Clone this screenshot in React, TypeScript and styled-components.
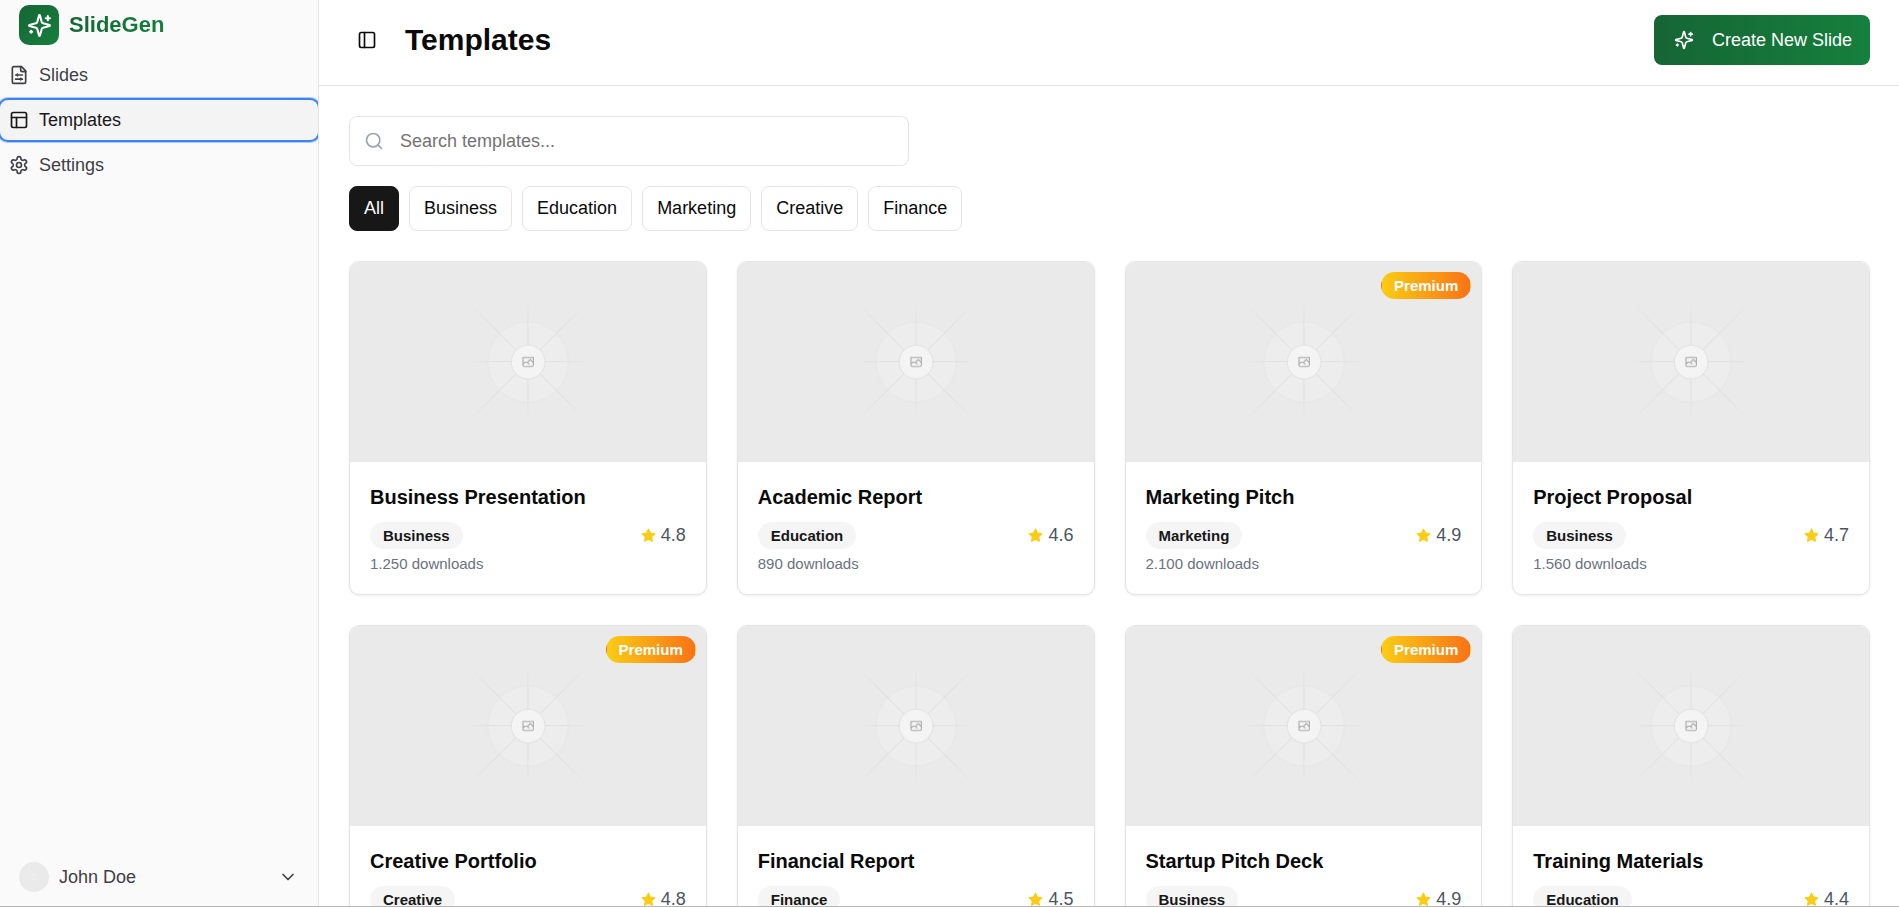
import React from "react";
import styled, { createGlobalStyle, css } from "styled-components";
import { ChevronDown, PanelLeft, PanelsTopLeft, Search } from "lucide-react";

const GlobalStyle = createGlobalStyle`
  *, *::before, *::after { box-sizing: border-box; }
  body {
    margin: 0;
    background: #ffffff;
    color: #0a0a0a;
    font-family: "Liberation Sans", Arial, Helvetica, sans-serif;
    font-size: 18px;
    line-height: 25px;
  }
  button, input { font: inherit; color: inherit; }
  svg { display: block; flex-shrink: 0; }
`;

const Shell = styled.div`
  display: flex;
  height: 100vh;
  overflow: hidden;
  border-bottom: 1px solid #b4b4b4;
`;

const Sidebar = styled.aside`
  display: flex;
  flex-direction: column;
  flex: 0 0 319px;
  overflow: hidden;
  background: #fafafa;
  border-right: 1px solid #e5e5e5;
  color: #3f3f46;
`;

const Brand = styled.a`
  display: flex;
  align-items: center;
  gap: 10px;
  padding: 5px 19px 10px;
  text-decoration: none;
`;

const BrandMark = styled.span`
  display: flex;
  align-items: center;
  justify-content: center;
  width: 40px;
  height: 40px;
  border-radius: 10px;
  background: linear-gradient(to bottom right, #166534, #15803d);
  color: #ffffff;
`;

const BrandName = styled.span`
  font-size: 22px;
  line-height: 30px;
  font-weight: 700;
  background: linear-gradient(to right, #166534, #15803d);
  background-clip: text;
  color: transparent;
`;

const Menu = styled.nav`
  display: flex;
  flex-direction: column;
  gap: 5px;
`;

const MenuLink = styled.a<{ $active?: boolean }>`
  display: flex;
  align-items: center;
  gap: 10px;
  height: 40px;
  padding: 0 9px;
  border-radius: 8px;
  color: inherit;
  text-decoration: none;
  ${({ $active }) =>
    $active &&
    css`
      background: #f4f4f5;
      color: #18181b;
      box-shadow: 0 0 0 2px #3b82f6, 0 0 0 3px rgba(59, 130, 246, 0.4);
    `}
`;

const UserButton = styled.button`
  display: flex;
  align-items: center;
  gap: 10px;
  margin-top: auto;
  padding: 14px 20px 14px 19px;
  border: 0;
  background: none;
  text-align: left;
`;

const UserName = styled.span`
  flex: 1;
`;

const Avatar = styled.span`
  width: 30px;
  height: 30px;
  border-radius: 50%;
  overflow: hidden;
`;

const Main = styled.main`
  flex: 1;
  min-width: 0;
  overflow: hidden;
`;

const Header = styled.header`
  display: flex;
  align-items: center;
  gap: 20px;
  padding: 15px 29px 20px 30px;
  border-bottom: 1px solid #e5e5e5;
`;

const IconButton = styled.button`
  display: flex;
  align-items: center;
  justify-content: center;
  width: 36px;
  height: 36px;
  padding: 0;
  border: 0;
  border-radius: 8px;
  background: none;
`;

const PageTitle = styled.h1`
  flex: 1;
  margin: 0;
  font-size: 30px;
  line-height: 40px;
  font-weight: 700;
`;

const CreateButton = styled.button`
  display: flex;
  align-items: center;
  gap: 18px;
  height: 50px;
  padding: 0 18px 0 20px;
  border: 0;
  border-radius: 8px;
  background: linear-gradient(to right, #166534, #15803d);
  color: #ffffff;
  white-space: nowrap;
`;

const Content = styled.div`
  padding: 30px 29px 30px 30px;
`;

const SearchField = styled.label`
  display: flex;
  align-items: center;
  gap: 16px;
  max-width: 560px;
  height: 50px;
  padding: 0 14px;
  border: 1px solid #e5e5e5;
  border-radius: 8px;
  color: #9ca3af;
`;

const SearchInput = styled.input`
  flex: 1;
  min-width: 0;
  padding: 0;
  border: 0;
  outline: 0;
  background: none;
  color: #0a0a0a;
  &::placeholder {
    color: #737373;
    opacity: 1;
  }
`;

const Filters = styled.div`
  display: flex;
  flex-wrap: wrap;
  gap: 10px;
  margin: 20px 0 30px;
`;

const FilterButton = styled.button<{ $active: boolean }>`
  height: 45px;
  padding: 0 14px;
  border: 1px solid ${({ $active }) => ($active ? "#171717" : "#e5e5e5")};
  border-radius: 8px;
  background: ${({ $active }) => ($active ? "#171717" : "#ffffff")};
  color: ${({ $active }) => ($active ? "#fafafa" : "#0a0a0a")};
`;

const Grid = styled.div`
  display: grid;
  grid-template-columns: repeat(4, minmax(0, 1fr));
  gap: 30px;
`;

const Card = styled.article`
  position: relative;
  overflow: hidden;
  border: 1px solid #e5e5e5;
  border-radius: 10px;
  background: #ffffff;
  box-shadow: 0 1px 3px rgba(0, 0, 0, 0.07);
`;

const Thumbnail = styled.div`
  height: 200px;
`;

const CardBody = styled.div`
  padding: 20px;
`;

const CardTitle = styled.h2`
  margin: 0 0 10px;
  font-size: 20px;
  line-height: 30px;
  font-weight: 700;
`;

const CardMeta = styled.div`
  display: flex;
  align-items: center;
  justify-content: space-between;
  margin-bottom: 5px;
`;

const Badge = styled.span`
  padding: 2px 12px;
  border: 1px solid transparent;
  border-radius: 14px;
  background: #f5f5f5;
  color: #171717;
  font-size: 15px;
  line-height: 21px;
  font-weight: 700;
`;

const PremiumBadge = styled(Badge)`
  position: absolute;
  top: 10px;
  right: 10px;
  background: linear-gradient(to right, #facc15, #f97316);
  color: #ffffff;
`;

const Rating = styled.span`
  display: flex;
  align-items: center;
  gap: 5px;
  color: #4b5563;
`;

const Downloads = styled.p`
  margin: 0;
  color: #6b7280;
  font-size: 15px;
  line-height: 20px;
`;

const PlaceholderSvg = styled.svg`
  width: 100%;
  height: 100%;
  background: #eaeaea;
`;

function Icon({
  size = 20,
  fill = "none",
  color = "currentColor",
  paths,
}: {
  size?: number;
  fill?: string;
  color?: string;
  paths: string[];
}) {
  return (
    <svg
      width={size}
      height={size}
      viewBox="0 0 24 24"
      fill={fill}
      stroke={color}
      strokeWidth="2"
      strokeLinecap="round"
      strokeLinejoin="round"
      aria-hidden="true"
    >
      {paths.map((d) => (
        <path key={d} d={d} />
      ))}
    </svg>
  );
}

const sparklesPaths = [
  "M9.937 15.5A2 2 0 0 0 8.5 14.063l-6.135-1.582a.5.5 0 0 1 0-.962L8.5 9.936A2 2 0 0 0 9.937 8.5l1.582-6.135a.5.5 0 0 1 .963 0L14.063 8.5A2 2 0 0 0 15.5 9.937l6.135 1.581a.5.5 0 0 1 0 .964L15.5 14.063a2 2 0 0 0-1.437 1.437l-1.582 6.135a.5.5 0 0 1-.963 0z",
  "M20 3v4",
  "M22 5h-4",
  "M4 17v2",
  "M5 18H3",
];

const fileSlidersPaths = [
  "M15 2H6a2 2 0 0 0-2 2v16a2 2 0 0 0 2 2h12a2 2 0 0 0 2-2V7Z",
  "M14 2v4a2 2 0 0 0 2 2h4",
  "M8 12h8",
  "M10 11v2",
  "M8 17h8",
  "M14 16v2",
];

const settingsPaths = [
  "M12.22 2h-.44a2 2 0 0 0-2 2v.18a2 2 0 0 1-1 1.73l-.43.25a2 2 0 0 1-2 0l-.15-.08a2 2 0 0 0-2.73.73l-.22.38a2 2 0 0 0 .73 2.73l.15.1a2 2 0 0 1 1 1.72v.51a2 2 0 0 1-1 1.74l-.15.09a2 2 0 0 0-.73 2.73l.22.38a2 2 0 0 0 2.73.73l.15-.08a2 2 0 0 1 2 0l.43.25a2 2 0 0 1 1 1.73V20a2 2 0 0 0 2 2h.44a2 2 0 0 0 2-2v-.18a2 2 0 0 1 1-1.73l.43-.25a2 2 0 0 1 2 0l.15.08a2 2 0 0 0 2.73-.73l.22-.39a2 2 0 0 0-.73-2.73l-.15-.08a2 2 0 0 1-1-1.74v-.5a2 2 0 0 1 1-1.74l.15-.09a2 2 0 0 0 .73-2.73l-.22-.38a2 2 0 0 0-2.73-.73l-.15.08a2 2 0 0 1-2 0l-.43-.25a2 2 0 0 1-1-1.73V4a2 2 0 0 0-2-2z",
  "M12 9a3 3 0 1 0 0 6a3 3 0 1 0 0-6z",
];

const starPaths = [
  "M12 2l3.09 6.26L22 9.27l-5 4.87 1.18 6.88L12 17.77l-6.18 3.25L7 14.14 2 9.27l6.91-1.01z",
];

const rays = [
  { angle: 0, reach: 196 },
  { angle: 90, reach: 196 },
  { angle: 45, reach: 277 },
  { angle: 135, reach: 277 },
];

function Placeholder({ id }: { id: string }) {
  return (
    <PlaceholderSvg viewBox="0 0 1200 1200" preserveAspectRatio="xMidYMid slice" aria-hidden="true">
      <defs>
        {rays.map(({ angle, reach }) => (
          <linearGradient
            key={angle}
            id={`${id}-${angle}`}
            gradientUnits="userSpaceOnUse"
            x1={-reach}
            x2={reach}
            y1="0"
            y2="0"
          >
            <stop stopColor="#c9c9c9" stopOpacity="0" />
            <stop offset=".208" stopColor="#c9c9c9" />
            <stop offset=".792" stopColor="#c9c9c9" />
            <stop offset="1" stopColor="#c9c9c9" stopOpacity="0" />
          </linearGradient>
        ))}
      </defs>
      <g opacity=".5">
        <g opacity=".5">
          <circle cx="600.7" cy="599.9" r="136.6" fill="#fafafa" />
          <circle cx="600.7" cy="599.9" r="135.4" fill="none" stroke="#c9c9c9" strokeWidth="2.418" />
        </g>
        {rays.map(({ angle, reach }) => (
          <g key={angle} transform={`translate(600 599) rotate(${angle})`}>
            <line x1={-reach} x2={reach} stroke={`url(#${id}-${angle})`} strokeWidth="2.418" />
          </g>
        ))}
        <circle cx="600.7" cy="599.9" r="56.9" fill="#ffffff" stroke="#c9c9c9" strokeWidth="2.418" />
        <path
          fill="#666666"
          fillRule="evenodd"
          d="M616.426 586.58h-31.434v16.176l3.553-3.554.531-.531h9.068l.074-.074 8.463-8.463h2.565l7.18 7.181V586.58Zm-15.715 14.654 3.698 3.699 1.283 1.282-2.565 2.565-1.282-1.283-5.2-5.199h-6.066l-5.514 5.514-.073.073v2.876a2.418 2.418 0 0 0 2.418 2.418h26.598a2.418 2.418 0 0 0 2.418-2.418v-8.317l-8.463-8.463-7.181 7.181-.071.072Zm-19.347 5.442v4.085a6.045 6.045 0 0 0 6.046 6.045h26.598a6.044 6.044 0 0 0 6.045-6.045v-7.108l1.356-1.355-1.282-1.283-.074-.073v-17.989h-38.689v23.43l-.146.146.146.147Z"
        />
      </g>
    </PlaceholderSvg>
  );
}

const categories = ["All", "Business", "Education", "Marketing", "Creative", "Finance"];

const templates = [
  { title: "Business Presentation", category: "Business", rating: "4.8", downloads: "1.250", premium: false },
  { title: "Academic Report", category: "Education", rating: "4.6", downloads: "890", premium: false },
  { title: "Marketing Pitch", category: "Marketing", rating: "4.9", downloads: "2.100", premium: true },
  { title: "Project Proposal", category: "Business", rating: "4.7", downloads: "1.560", premium: false },
  { title: "Creative Portfolio", category: "Creative", rating: "4.8", downloads: "980", premium: true },
  { title: "Financial Report", category: "Finance", rating: "4.5", downloads: "750", premium: false },
  { title: "Startup Pitch Deck", category: "Business", rating: "4.9", downloads: "1.890", premium: true },
  { title: "Training Materials", category: "Education", rating: "4.4", downloads: "650", premium: false },
];

export default function App() {
  const [category, setCategory] = React.useState("All");
  const visible = templates.filter((t) => category === "All" || t.category === category);

  return (
    <>
      <GlobalStyle />
      <Shell>
        <Sidebar>
          <Brand href="#home">
            <BrandMark>
              <Icon size={25} paths={sparklesPaths} />
            </BrandMark>
            <BrandName>SlideGen</BrandName>
          </Brand>
          <Menu aria-label="Main">
            <MenuLink href="#slides">
              <Icon paths={fileSlidersPaths} />
              Slides
            </MenuLink>
            <MenuLink href="#templates" $active aria-current="page">
              <PanelsTopLeft size={20} />
              Templates
            </MenuLink>
            <MenuLink href="#settings">
              <Icon paths={settingsPaths} />
              Settings
            </MenuLink>
          </Menu>
          <UserButton type="button">
            <Avatar>
              <Placeholder id="avatar" />
            </Avatar>
            <UserName>John Doe</UserName>
            <ChevronDown size={20} />
          </UserButton>
        </Sidebar>
        <Main>
          <Header>
            <IconButton type="button" aria-label="Toggle sidebar">
              <PanelLeft size={20} />
            </IconButton>
            <PageTitle>Templates</PageTitle>
            <CreateButton type="button">
              <Icon paths={sparklesPaths} />
              Create New Slide
            </CreateButton>
          </Header>
          <Content>
            <SearchField>
              <Search size={20} />
              <SearchInput type="text" aria-label="Search templates" placeholder="Search templates..." />
            </SearchField>
            <Filters>
              {categories.map((name) => (
                <FilterButton
                  key={name}
                  type="button"
                  $active={name === category}
                  aria-pressed={name === category}
                  onClick={() => setCategory(name)}
                >
                  {name}
                </FilterButton>
              ))}
            </Filters>
            <Grid>
              {visible.map((t, index) => (
                <Card key={t.title}>
                  <Thumbnail>
                    <Placeholder id={`thumb-${index}`} />
                  </Thumbnail>
                  {t.premium && <PremiumBadge>Premium</PremiumBadge>}
                  <CardBody>
                    <CardTitle>{t.title}</CardTitle>
                    <CardMeta>
                      <Badge>{t.category}</Badge>
                      <Rating>
                        <Icon size={15} color="#facc15" fill="#facc15" paths={starPaths} />
                        {t.rating}
                      </Rating>
                    </CardMeta>
                    <Downloads>{t.downloads} downloads</Downloads>
                  </CardBody>
                </Card>
              ))}
            </Grid>
          </Content>
        </Main>
      </Shell>
    </>
  );
}
